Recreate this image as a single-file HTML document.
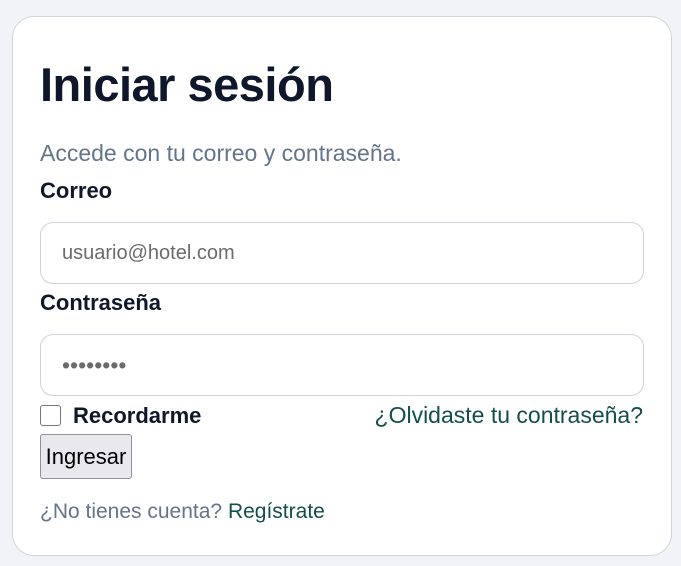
<!DOCTYPE html>
<html><head><meta charset="utf-8"><style>
*{box-sizing:border-box;margin:0;padding:0}
body{width:681px;height:566px;background:#f1f3f7;font-family:"Liberation Sans",sans-serif;position:relative;overflow:hidden}
.card{position:absolute;left:12px;top:16px;width:660px;height:540px;background:#fff;border:1px solid #cfd5dd;border-radius:22px}
.a{position:absolute;white-space:nowrap}
h1{position:absolute;left:40px;top:57px;font-size:47px;font-weight:bold;color:#0f172a;letter-spacing:-0.5px}
.sub{left:40px;top:140px;font-size:23px;color:#64748b}
.lbl{left:40px;font-size:22px;font-weight:bold;color:#0f172a}
.inp{position:absolute;left:40px;width:604px;height:62px;border:1px solid #cdd3da;border-radius:13px;font-size:20px;color:#6b6b6b;padding-left:21px;line-height:60px}
.cb{position:absolute;left:40px;top:405px;width:21px;height:21px;border:1.5px solid #767676;border-radius:3px;background:#fff}
.btn{position:absolute;left:40px;top:434px;width:92px;height:45px;background:#e9e9ed;border:1px solid #8f8f9d;border-radius:3px;font-size:22px;color:#000;line-height:43px;text-align:center}
</style></head><body>
<div class="card"></div>
<h1>Iniciar sesión</h1>
<div class="a sub">Accede con tu correo y contraseña.</div>
<div class="a lbl" style="top:178px">Correo</div>
<div class="inp" style="top:222px">usuario@hotel.com</div>
<div class="a lbl" style="top:290px">Contraseña</div>
<div class="inp" style="top:334px;font-size:23px">••••••••</div>
<div class="cb"></div>
<div class="a" style="left:73px;top:403px;font-size:22px;font-weight:bold;color:#0f172a">Recordarme</div>
<div class="a" style="right:38px;top:402px;font-size:23px;color:#134e4a">¿Olvidaste tu contraseña?</div>
<div class="btn">Ingresar</div>
<div class="a" style="left:40px;top:500px;font-size:21px;color:#64748b">¿No tienes cuenta? <span style="color:#134e4a">Regístrate</span></div>
</body></html>
